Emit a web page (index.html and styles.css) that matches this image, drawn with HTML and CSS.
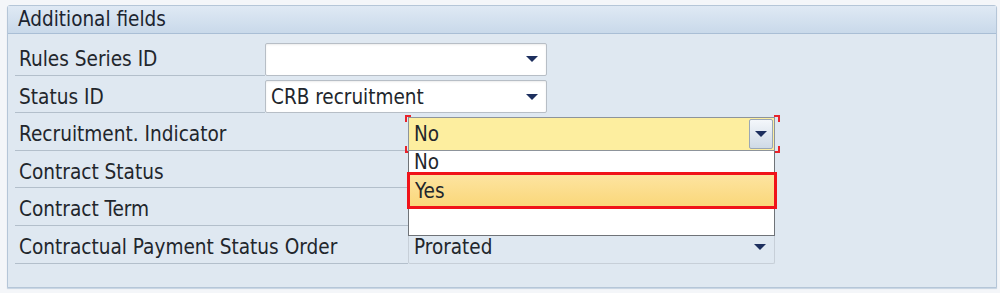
FILE: index.html
```html
<!DOCTYPE html>
<html lang="en">
<head>
  <meta charset="UTF-8">
  <title>Additional fields</title>
  <link rel="stylesheet" href="styles.css">
</head>
<body>
  <div class="panel">
    <div class="panel-title">Additional fields</div>

    <div class="rows">
      <div class="row">
        <div class="label short">Rules Series ID</div>
        <div class="field">
          <span class="value"></span>
          <span class="arrow"></span>
        </div>
      </div>

      <div class="row">
        <div class="label short">Status ID</div>
        <div class="field">
          <span class="value">CRB recruitment</span>
          <span class="arrow"></span>
        </div>
      </div>

      <!-- open dropdown -->
      <div class="row">
        <div class="label">Recruitment. Indicator</div>
        <div class="field wide focus">
          <span class="value">No</span>
          <span class="btn"><span class="arrow"></span></span>
          <span class="corner tl"></span>
          <span class="corner tr"></span>
          <span class="corner bl"></span>
          <span class="corner br"></span>

          <ul class="list">
            <li>No</li>
            <li class="hl">Yes</li>
            <li></li>
          </ul>
        </div>
      </div>

      <div class="row">
        <div class="label">Contract Status</div>
        <div class="field wide"></div>
      </div>

      <div class="row">
        <div class="label">Contract Term</div>
        <div class="field wide"></div>
      </div>

      <div class="row">
        <div class="label">Contractual Payment Status Order</div>
        <div class="field wide flat">
          <span class="value">Prorated</span>
          <span class="arrow"></span>
        </div>
      </div>
    </div>
  </div>
</body>
</html>
```

FILE: styles.css
```css
/* base */
body {
  margin: 0;
  background-color: #f4f6f9;
  font-family: Tahoma, "DejaVu Sans Condensed", "Liberation Sans", sans-serif;
  color: #22262c;
}
.panel {
  margin: 5px 3px 5px 7px;
  height: 283px;
  box-sizing: border-box;
  background-color: #dfe8f1;
  border: 1px solid #b5c6d8;
  border-radius: 3px 3px 0 0;
  box-shadow: 0 1px 1px #c5d3e1;
}
.panel-title {
  height: 27px;
  padding-left: 10px;
  font-size: 20.5px;
  line-height: 26px;
  color: #1c2530;
  background: linear-gradient(#dfe9f4, #c9d9ea);
  border-bottom: 1px solid #a9bed5;
}
.rows {
  padding: 4px 0 0 7px;
}
.row {
  height: 37.6px;
  display: flex;
  align-items: flex-end;
}
.label {
  width: 393px;
  height: 100%;
  box-sizing: border-box;
  padding: 9px 0 0 4px;
  font-size: 20.6px;
  line-height: 24px;
  border-bottom: 1px solid #b3bfcb;
}
.label.short {
  width: 250px;
}

/* input boxes */
.field {
  position: relative;
  width: 282px;
  height: 33px;
  box-sizing: border-box;
  display: flex;
  align-items: center;
  background-color: #fff;
  border: 1px solid #b7bec6;
  border-radius: 2px;
  box-shadow: inset 0 1px 2px rgba(0, 0, 0, 0.08);
  font-size: 20.5px;
}
.field .value {
  flex: 1;
  padding-left: 5px;
}
.arrow {
  width: 0;
  height: 0;
  margin-right: 8px;
  border-left: 6px solid transparent;
  border-right: 6px solid transparent;
  border-top: 6px solid #1d2f5e;
}
.field.wide {
  width: 367px;
}
.field.flat {
  background-color: transparent;
  border-color: #c7cfd8;
  border-top: none;
  box-shadow: none;
}
.field.focus {
  height: 34px;
  background-color: #fdee9f;
  border-color: #8d949b;
  border-radius: 0;
  box-shadow: none;
}
.btn {
  width: 24px;
  height: 30px;
  display: flex;
  align-items: center;
  justify-content: center;
  background: linear-gradient(#f4f7fb, #cfdae6);
  border: 1px solid #9aa7b6;
  border-radius: 2px;
  box-sizing: border-box;
  margin-right: 1px;
}
.btn .arrow {
  margin: 0;
}

/* red focus corners */
.corner {
  position: absolute;
  width: 4px;
  height: 5px;
  border: 0 solid #e8232b;
}
.corner.tl { top: -3px; left: -4px; border-top-width: 2px; border-left-width: 2px; }
.corner.tr { top: -3px; right: -6px; border-top-width: 2px; border-right-width: 2px; }
.corner.bl { bottom: -3px; left: -4px; border-bottom-width: 2px; border-left-width: 2px; }
.corner.br { bottom: -3px; right: -6px; border-bottom-width: 2px; border-right-width: 2px; }

/* dropdown list */
.list {
  position: absolute;
  top: 33px;
  left: -1px;
  width: 367px;
  margin: 0;
  padding: 0;
  list-style: none;
  background-color: #fff;
  border: 1px solid #6f7378;
  border-top: none;
  box-sizing: border-box;
  z-index: 2;
}
.list li {
  height: 21px;
  padding-left: 5px;
  font-size: 20.5px;
  line-height: 22px;
}
.list li.hl {
  height: 37px;
  margin: 0 -3px 0 -2px;
  background: linear-gradient(#fde4a0, #fad77a);
  border: 3px solid #f0131a;
  box-sizing: border-box;
  padding-left: 5px;
  line-height: 33px;
}
.list li:last-child {
  height: 26px;
}
```
